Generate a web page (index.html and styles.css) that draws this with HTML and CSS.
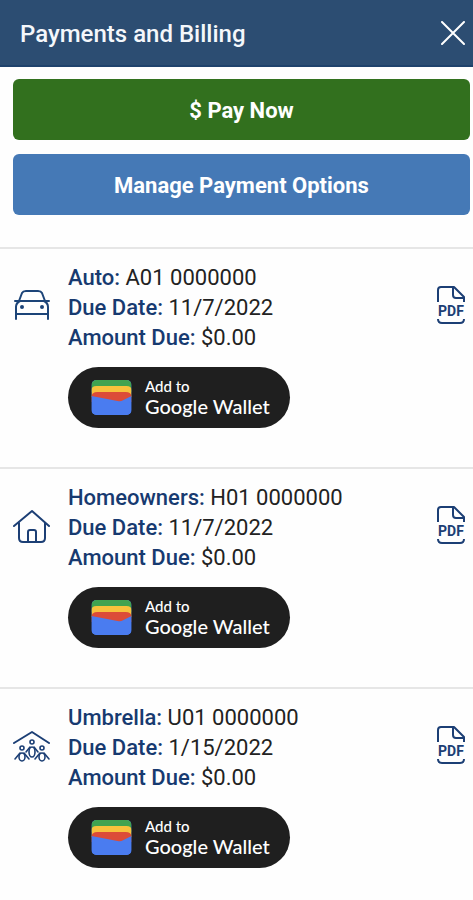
FILE: index.html
```html
<!DOCTYPE html>
<html lang="en">
<head>
    <meta charset="UTF-8">
    <meta name="viewport" content="width=device-width, initial-scale=1.0">
    <title>Payments and Billing</title>
    <link rel="stylesheet" href="styles.css">
</head>
<body>
    <!-- Shared icons -->
    <svg class="sprite" aria-hidden="true">
        <symbol id="icon-wallet" viewBox="0 0 40 35">
            <clipPath id="wallet-shape"><rect width="40" height="35" rx="5"/></clipPath>
            <g clip-path="url(#wallet-shape)">
                <path fill="#4a7cf0" d="M0 0h40v35H0z"/>
                <path fill="#41a350" d="M0 0h40v12H0z"/>
                <path fill="#f8c23c" d="M0 10q0-4 5-4h30q5 0 5 4v7H0z"/>
                <path fill="#dc4b38" d="M0 17q0-5 6-5h28q6 0 6 5v5H0z"/>
                <path fill="#4a7cf0" d="M0 16l26 5q3 1 6-1l8-4v19H0z"/>
            </g>
        </symbol>
    </svg>

    <header class="header">
        <h1>Payments and Billing</h1>
        <button class="close" aria-label="Close">
            <svg width="24" height="24" viewBox="0 0 24 24" fill="none" stroke="#fff" stroke-width="2" stroke-linecap="round">
                <path d="M1 1l22 22M23 1L1 23"/>
            </svg>
        </button>
    </header>

    <main>
        <div class="actions">
            <button class="btn pay">$ Pay Now</button>
            <button class="btn manage">Manage Payment Options</button>
        </div>

        <!-- Auto policy -->
        <section class="policy">
            <svg class="policy-icon" viewBox="0 0 38 38" fill="none" stroke="#1c4478" stroke-width="2" stroke-linecap="round" stroke-linejoin="round">
                <path d="M6 15l3-8q1-2 4-2h12q3 0 4 2l3 8"/>
                <path d="M2 15h34M3 33V21q0-4 4-6M35 33V21q0-4-4-6M3 28h32"/>
                <circle cx="9" cy="21" r="1"/>
                <circle cx="29" cy="21" r="1"/>
            </svg>
            <div class="details">
                <p><strong>Auto:</strong> A01 0000000</p>
                <p><strong>Due Date:</strong> 11/7/2022</p>
                <p><strong>Amount Due:</strong> $0.00</p>
                <button class="wallet">
                    <svg class="wallet-icon"><use href="#icon-wallet"/></svg>
                    <span class="wallet-label"><small>Add to</small>Google Wallet</span>
                </button>
            </div>
            <a class="pdf" href="#" aria-label="Auto PDF">
                <svg class="pdf-icon" viewBox="0 0 28 38">
                    <path d="M1 16V4q0-3 3-3h13l10 10v5M16 1v8q0 3 3 3h8M1 33q0 4 4 4h18q4 0 4-4"/>
                    <text x="14" y="30" text-anchor="middle">PDF</text>
                </svg>
            </a>
        </section>

        <!-- Homeowners policy -->
        <section class="policy">
            <svg class="policy-icon" viewBox="0 0 38 38" fill="none" stroke="#1c3f75" stroke-width="2" stroke-linecap="round" stroke-linejoin="round">
                <path d="M1 20L19 5l17 15"/>
                <path d="M6 17v15q0 4 4 4h18q4 0 4-4V17"/>
                <path d="M15 36V26q0-2 2-2h4q2 0 2 2v10"/>
            </svg>
            <div class="details">
                <p><strong>Homeowners:</strong> H01 0000000</p>
                <p><strong>Due Date:</strong> 11/7/2022</p>
                <p><strong>Amount Due:</strong> $0.00</p>
                <button class="wallet">
                    <svg class="wallet-icon"><use href="#icon-wallet"/></svg>
                    <span class="wallet-label"><small>Add to</small>Google Wallet</span>
                </button>
            </div>
            <a class="pdf" href="#" aria-label="Homeowners PDF">
                <svg class="pdf-icon" viewBox="0 0 28 38">
                    <path d="M1 16V4q0-3 3-3h13l10 10v5M16 1v8q0 3 3 3h8M1 33q0 4 4 4h18q4 0 4-4"/>
                    <text x="14" y="30" text-anchor="middle">PDF</text>
                </svg>
            </a>
        </section>

        <!-- Umbrella policy -->
        <section class="policy">
            <svg class="policy-icon" viewBox="0 0 38 38" fill="none" stroke="#1c3f75" stroke-width="2" stroke-linecap="round" stroke-linejoin="round">
                <path d="M1 17L19 6l17 11"/>
                <g stroke-width="1.6">
                    <circle cx="19" cy="16" r="2"/>
                    <circle cx="9" cy="22" r="2"/>
                    <circle cx="29" cy="22" r="2"/>
                    <ellipse cx="19" cy="26" rx="3" ry="5"/>
                    <ellipse cx="9" cy="31" rx="3" ry="4"/>
                    <ellipse cx="29" cy="31" rx="3" ry="4"/>
                    <path d="M17 21l-4 5M21 21l4 5M7 27l-5 6M11 27l5 6M27 27l-5 6M31 27l5 6"/>
                </g>
            </svg>
            <div class="details">
                <p><strong>Umbrella:</strong> U01 0000000</p>
                <p><strong>Due Date:</strong> 1/15/2022</p>
                <p><strong>Amount Due:</strong> $0.00</p>
                <button class="wallet">
                    <svg class="wallet-icon"><use href="#icon-wallet"/></svg>
                    <span class="wallet-label"><small>Add to</small>Google Wallet</span>
                </button>
            </div>
            <a class="pdf" href="#" aria-label="Umbrella PDF">
                <svg class="pdf-icon" viewBox="0 0 28 38">
                    <path d="M1 16V4q0-3 3-3h13l10 10v5M16 1v8q0 3 3 3h8M1 33q0 4 4 4h18q4 0 4-4"/>
                    <text x="14" y="30" text-anchor="middle">PDF</text>
                </svg>
            </a>
        </section>
    </main>
</body>
</html>
```
FILE: styles.css
```css
* {
    box-sizing: border-box;
}
body {
    margin: 0;
    background-color: #fefefe;
    color: #222;
    font-family: Roboto, sans-serif;
    font-size: 22px;
    line-height: 30px;
}
button {
    border: none;
    font-family: inherit;
    cursor: pointer;
}
.sprite {
    position: absolute;
    width: 0;
    height: 0;
}
.header {
    display: flex;
    justify-content: space-between;
    align-items: center;
    height: 67px;
    padding: 0 8px 0 20px;
    background-color: #2c4d72;
    border-bottom: 2px solid #1f426c;
}
h1 {
    margin: 0;
    padding-top: 2px;
    color: #f4f7fb;
    font-size: 24px;
    font-weight: 500;
}
.close {
    display: flex;
    padding: 0;
    background: none;
}
.actions {
    display: flex;
    flex-direction: column;
    gap: 14px;
    padding: 12px 3px 32px 13px;
}
.btn {
    height: 61px;
    padding: 2px 6px 0;
    border-radius: 6px;
    color: white;
    font-size: 22px;
    font-weight: 700;
}
.pay {
    background-color: #32701e; /* Green */
}
.manage {
    background-color: #4579b6; /* Blue */
}
.policy {
    display: flex;
    align-items: flex-start;
    padding: 14px 8px 39px 13px;
    border-top: 2px solid #e6e6e6;
}
.policy-icon {
    width: 38px;
    height: 38px;
    margin: 23px 17px 0 0;
}
.details {
    flex: 1;
}
p {
    margin: 0;
}
strong {
    color: #173a70;
    font-weight: 500;
}
.wallet {
    display: flex;
    align-items: center;
    gap: 13px;
    height: 61px;
    margin-top: 14px;
    padding: 0 20px 0 23px;
    border-radius: 31px;
    background-color: #1f1f1f;
    color: white;
}
.wallet-icon {
    width: 41px;
    height: 35px;
}
.wallet-label {
    padding-bottom: 2px;
    font-family: Lato, sans-serif;
    font-size: 20px;
    font-weight: 500;
    line-height: 22px;
    text-align: left;
}
.wallet-label small {
    display: block;
    font-size: 15px;
    line-height: 18px;
}
.pdf {
    margin-top: 23px;
}
.pdf-icon {
    display: block;
    width: 28px;
    height: 38px;
}
.pdf-icon path {
    fill: none;
    stroke: #1c3f75;
    stroke-width: 2;
    stroke-linejoin: round;
}
.pdf-icon text {
    fill: #1c3f75;
    font-size: 14px;
    font-weight: 700;
}
```
